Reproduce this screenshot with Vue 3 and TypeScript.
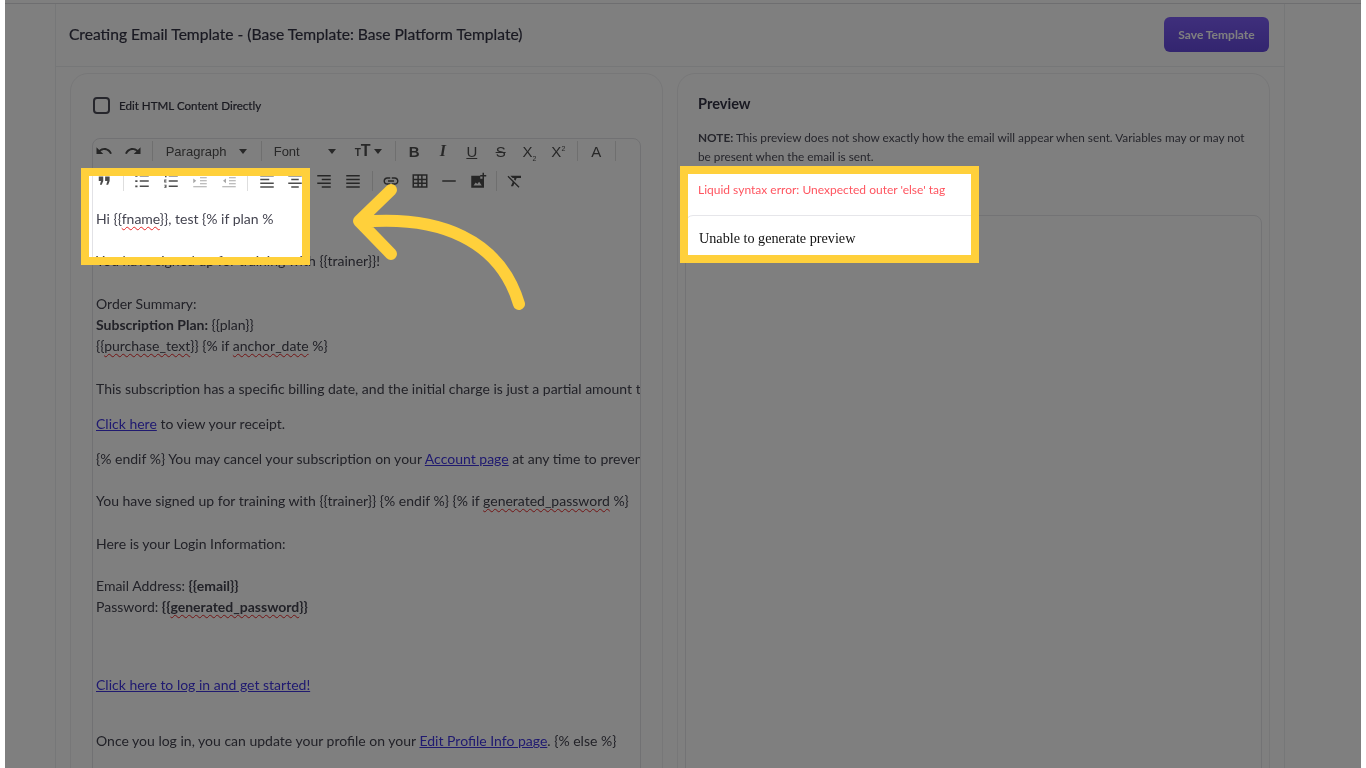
<script setup lang="ts">
// toolbar icon paths (24x24 box)
const icons: Record<string, string> = {
  undo: "M12.5 8c-2.65 0-5.05.99-6.9 2.6L2 7v9h9l-3.62-3.62c1.39-1.16 3.16-1.88 5.12-1.88 3.54 0 6.55 2.31 7.6 5.5l2.37-.78C21.08 11.03 17.15 8 12.5 8z",
  redo: "M18.4 10.6C16.55 8.99 14.15 8 11.5 8c-4.65 0-8.58 3.03-9.96 7.22L3.9 16c1.05-3.19 4.05-5.5 7.6-5.5 1.95 0 3.73.72 5.12 1.88L13 16h9V7l-3.6 3.6z",
  quote: "M5 6h6v6l-2 5H6.5l1.5-5H5zM13.5 6h6v6l-2 5H15l1.5-5h-3z",
  ul: "M3 4h3v2.4H3zM9 4h12v2H9zM3 11h3v2.4H3zM9 11h12v2H9zM3 18h3v2.4H3zM9 18h12v2H9z",
  ol: "M4 3h2v4H4zM9 4h12v2H9zM3 10h3v1.4H4.4v1.2H6V14H3zM9 11h12v2H9zM3 17h3v4H3v-1h1.6v-.5H3.6v-1h1v-.5H3zM9 18h12v2H9z",
  outdent: "M3 3h18v1.4H3zM12 7h9v1.4h-9zM12 11h9v1.4h-9zM12 15h9v1.4h-9zM3 19h18v1.4H3zM3 8.5l4 3.2-4 3.2z",
  indent: "M3 3h18v1.4H3zM12 7h9v1.4h-9zM12 11h9v1.4h-9zM12 15h9v1.4h-9zM3 19h18v1.4H3zM8 8.5v6.4l-4-3.2z",
  left: "M3 4h18v2H3zM3 9h12v2H3zM3 14h18v2H3zM3 19h18v2H3z",
  center: "M3 4h18v2H3zM7 9h10v2H7zM3 14h18v2H3zM7 19h10v2H7z",
  right: "M3 4h18v2H3zM9 9h12v2H9zM3 14h18v2H3zM9 19h12v2H9z",
  justify: "M3 4h18v2H3zM3 9h18v2H3zM3 14h18v2H3zM3 19h18v2H3z",
  link: "M3.9 12c0-1.71 1.39-3.1 3.1-3.1h4V7H7c-2.76 0-5 2.24-5 5s2.24 5 5 5h4v-1.9H7c-1.71 0-3.1-1.39-3.1-3.1zM8 13h8v-2H8v2zm9-6h-4v1.9h4c1.71 0 3.1 1.39 3.1 3.1s-1.39 3.1-3.1 3.1h-4V17h4c2.76 0 5-2.24 5-5s-2.24-5-5-5z",
  table: "M2 3h20v18H2zM4 5v4h4.5V5zM10.500 5v4h3V5zM15.500 5v4H20V5zM4 11v3h4.500v-3zM10.500 11v3h3v-3zM15.500 11v3H20v-3zM4 16v3h4.500v-3zM10.500 16v3h3v-3zM15.500 16v3H20v-3z",
  hr: "M3 11h18v2H3z",
  image: "M3 5h12v4h5v12H3zM6 18h11l-3.5-5-2.5 3-2-2zM18 1h2v3h3v2h-3v3h-2V6h-3V4h3z",
  clear: "M3.27 5L2 6.27l6.97 6.97L6.5 19h3l1.57-3.66L16.73 21 18 19.73 3.55 5.27 3.27 5zM6 5v.18L8.82 8h2.4l-.72 1.68 2.1 2.1L14.21 8H20V5H6z",
};

// second toolbar row, split where the separators go
const secondRow: string[][] = [
  ["quote"],
  ["ul", "ol", "outdent", "indent"],
  ["left", "center", "right", "justify"],
  ["link", "table", "hr", "image"],
  ["clear"],
];
</script>

<template>
  <div class="stage">
    <div class="topbar"></div>
    <main class="main">
      <header class="page-head">
        <h1 class="title">Creating Email Template - (Base Template: Base Platform Template)</h1>
        <span class="save-btn">Save Template</span>
      </header>

      <div class="columns">
        <section class="card">
          <label class="html-toggle">
            <span class="checkbox"></span>
            Edit HTML Content Directly
          </label>

          <div class="editor">
            <div class="toolbar">
              <div class="tb-row">
                <span class="tb"><svg viewBox="0 0 24 24"><path :d="icons.undo" /></svg></span>
                <span class="tb"><svg viewBox="0 0 24 24"><path :d="icons.redo" /></svg></span>
                <i class="sep"></i>
                <span class="select select-para">Paragraph<i class="caret"></i></span>
                <i class="sep"></i>
                <span class="select select-font">Font<i class="caret"></i></span>
                <span class="size-btn"><small>T</small>T<i class="caret"></i></span>
                <i class="sep"></i>
                <span class="tb glyph bold">B</span>
                <span class="tb glyph italic">I</span>
                <span class="tb glyph under">U</span>
                <span class="tb glyph strike">S</span>
                <span class="tb glyph"><span>X<sub>2</sub></span></span>
                <span class="tb glyph"><span>X<sup>2</sup></span></span>
                <i class="sep"></i>
                <span class="tb glyph">A</span>
                <i class="sep"></i>
              </div>
              <div class="tb-row">
                <template v-for="(group, g) in secondRow" :key="g">
                  <i v-if="g > 0" class="sep"></i>
                  <span
                    v-for="name in group"
                    :key="name"
                    class="tb"
                    :class="{ faded: name === 'outdent' || name === 'indent' }"
                  >
                    <svg viewBox="0 0 24 24"><path :d="icons[name]" fill-rule="evenodd" /></svg>
                  </span>
                </template>
              </div>
            </div>

            <div class="content" v-pre>
              <p>
                Hi {{<span class="sp">fname</span>}}, test {% if plan %<br /><br />
                You have signed up for training with {{trainer}}!<br /><br />
                Order Summary:<br />
                <b>Subscription Plan:</b> {{plan}}<br />
                {{<span class="sp">purchase_text</span>}} {% if <span class="sp">anchor_date</span> %}<br /><br />
                This subscription has a specific billing date, and the initial charge is just a partial amount to cover the time until then.
              </p>
              <p><a>Click here</a> to view your receipt.</p>
              <p>
                {% endif %} You may cancel your subscription on your <a>Account page</a> at any time to prevent future charges.<br /><br />
                You have signed up for training with {{trainer}} {% endif %} {% if <span class="sp">generated_password</span> %}<br /><br />
                Here is your Login Information:<br /><br />
                Email Address: <b>{{email}}</b><br />
                Password: <b>{{<span class="sp">generated_password</span>}}</b><br /><br />
              </p>
              <p>
                &nbsp;<br />
                <a>Click here to log in and get started!</a><br /><br />
              </p>
              <p>Once you log in, you can update your profile on your <a>Edit Profile Info page</a>. {% else %}</p>
            </div>
          </div>
        </section>

        <section class="card preview">
          <div class="preview-head">
            <h2 class="preview-title">Preview</h2>
            <p class="note">
              <b>NOTE:</b> This preview does not show exactly how the email will appear when sent. Variables may or may not be present when the email is sent.
            </p>
            <p class="error">Liquid syntax error: Unexpected outer 'else' tag</p>
          </div>
          <div class="frame">Unable to generate preview</div>
        </section>
      </div>
    </main>

    <!-- dim layer with two windows cut out, then the yellow frames and the arrow -->
    <div class="dim"></div>
    <div class="mark mark-editor"></div>
    <div class="mark mark-error"></div>
    <svg class="arrow" viewBox="340 180 200 140">
      <path d="M361 222C440 215 500 240 519 304M391 190L359 221L391 254" />
    </svg>
  </div>
</template>

<style scoped>
.stage {
  position: relative;
  height: 768px;
  margin: 0 5px;
  overflow: hidden;
  background: #fff;
  font-family: Lato, "Open Sans", sans-serif;
  color: #444450;
  filter: blur(0.55px);
}

.topbar {
  height: 3px;
  border-bottom: 1px solid #dcdce0;
}

.main {
  width: 1230px;
  margin-left: 50px;
  border-left: 1px solid #eceef0;
  border-right: 1px solid #eceef0;
  box-sizing: border-box;
  height: 764px;
}

/* header */
.page-head {
  display: flex;
  justify-content: space-between;
  align-items: center;
  height: 63px;
  padding: 0 15px 0 13px;
  border-bottom: 1px solid #eceef0;
  box-sizing: border-box;
}

.title {
  margin: 0;
  font-size: 15.6px;
  font-weight: 400;
  line-height: 20px;
  color: #333344;
  margin-top: -3px;
  -webkit-text-stroke: 0.2px #333344;
}

.save-btn {
  display: flex;
  align-items: center;
  justify-content: center;
  width: 105px;
  height: 35px;
  border-radius: 6px;
  margin-top: -2px;
  background: linear-gradient(#7e5ef8, #664ade);
  color: #fff;
  font-size: 12px;
  font-weight: 700;
}

/* columns */
.columns {
  display: flex;
  gap: 14px;
  padding: 6px 14px 0;
}

.card {
  width: 593px;
  height: 760px;
  box-sizing: border-box;
  border: 1px solid #eeeef0;
  border-radius: 18px;
  padding: 23px 21px 0;
}

.html-toggle {
  display: flex;
  align-items: center;
  gap: 9px;
  height: 17px;
  font-size: 11.6px;
  color: #333340;
  -webkit-text-stroke: 0.2px #333340;
  padding-left: 1px;
}

.checkbox {
  width: 17px;
  height: 17px;
  box-sizing: border-box;
  border: 2px solid #4c4c58;
  border-radius: 4px;
}

.editor {
  margin-top: 24px;
  height: 700px;
  border: 1px solid #e2e2e6;
  border-radius: 8px;
  overflow: hidden;
}

/* toolbar */
.toolbar {
  display: flex;
  flex-direction: column;
  gap: 6px;
  font-family: "Liberation Sans", Arial, sans-serif;
  color: #505050;
}

.tb-row {
  display: flex;
  align-items: center;
  height: 24px;
  margin-left: -3px;
}

.tb {
  flex: none;
  width: 28.85px;
  height: 24px;
  display: flex;
  align-items: center;
  justify-content: center;
}

.tb svg {
  width: 18px;
  height: 18px;
  fill: #4c4c4c;
}

.faded svg {
  fill: #a8a8a8;
}

.sep {
  flex: none;
  width: 1px;
  height: 20px;
  margin: 0 4px;
  background: #dedede;
}

.select {
  flex: none;
  display: flex;
  align-items: center;
  justify-content: space-between;
  box-sizing: border-box;
  font-size: 13px;
  height: 24px;
}

.select-para {
  width: 100px;
  padding: 0 9.5px 0 9px;
}

.select-font {
  width: 84px;
  padding: 0 13.5px 0 8px;
}

.caret {
  width: 0;
  height: 0;
  border-left: 4.5px solid transparent;
  border-right: 4.5px solid transparent;
  border-top: 5px solid #505050;
}

.size-btn {
  flex: none;
  display: flex;
  align-items: center;
  width: 41px;
  padding-left: 5px;
  box-sizing: border-box;
  font-size: 16px;
  font-weight: 700;
}

.size-btn small {
  font-size: 10px;
  margin-top: 3px;
}

.size-btn .caret {
  margin-left: 3px;
  border-left-width: 4px;
  border-right-width: 4px;
}

.glyph {
  font-size: 15px;
}

.glyph sub,
.glyph sup {
  font-size: 7px;
  line-height: 0;
}

.bold {
  font-weight: 700;
}

.italic {
  font-family: "Liberation Serif", serif;
  font-weight: 700;
  font-style: italic;
  font-size: 16px;
}

.under {
  text-decoration: underline;
}

.strike {
  text-decoration: line-through;
}

/* editor text */
.content {
  padding: 15px 3px 0;
  font-size: 14px;
  line-height: 21.2px;
  white-space: nowrap;
  color: #444450;
}

.content p {
  margin: 0 0 14px;
}

.content a {
  color: #4035e0;
  text-decoration: underline;
}

.sp {
  text-decoration: underline wavy #e62828 1px;
  text-decoration-skip-ink: none;
  text-underline-offset: 2px;
}

/* preview */
.preview {
  padding: 0 7px;
}

.preview-head {
  padding: 20px 13px 0;
}

.preview-title {
  margin: 0;
  font-size: 14.6px;
  font-weight: 700;
  line-height: 20px;
  color: #333344;
}

.note {
  margin: 14px 0 0;
  font-size: 11.8px;
  line-height: 19px;
  color: #4c4c58;
}

.error {
  margin: 14px 0 0;
  font-size: 12px;
  line-height: 20px;
  color: #ff5560;
}

.frame {
  margin-top: 15px;
  height: 560px;
  border: 1px solid #e6e6ea;
  border-radius: 8px 8px 0 0;
  padding: 12px 13px;
  font-family: "Liberation Serif", "Times New Roman", serif;
  font-size: 14.2px;
  line-height: 20px;
  color: #111;
}

/* overlay */
.dim {
  position: absolute;
  inset: 0;
  background: rgba(0, 0, 0, 0.5);
  clip-path: path(evenodd, "M0 0H1356V768H0ZM80 172H301V261H80ZM679 170H970V259H679Z");
}

.mark {
  position: absolute;
  box-sizing: border-box;
  border: 8px solid #ffd03b;
}

.mark-editor {
  left: 76px;
  top: 168px;
  width: 229px;
  height: 97px;
}

.mark-error {
  left: 675px;
  top: 166px;
  width: 299px;
  height: 97px;
}

.arrow {
  position: absolute;
  left: 335px;
  top: 180px;
  width: 200px;
  height: 140px;
  fill: none;
  stroke: #ffd03b;
  stroke-width: 12;
  stroke-linecap: round;
  stroke-linejoin: round;
}
</style>

<style>
html,
body {
  background: #fff;
  overflow: hidden;
}
</style>
